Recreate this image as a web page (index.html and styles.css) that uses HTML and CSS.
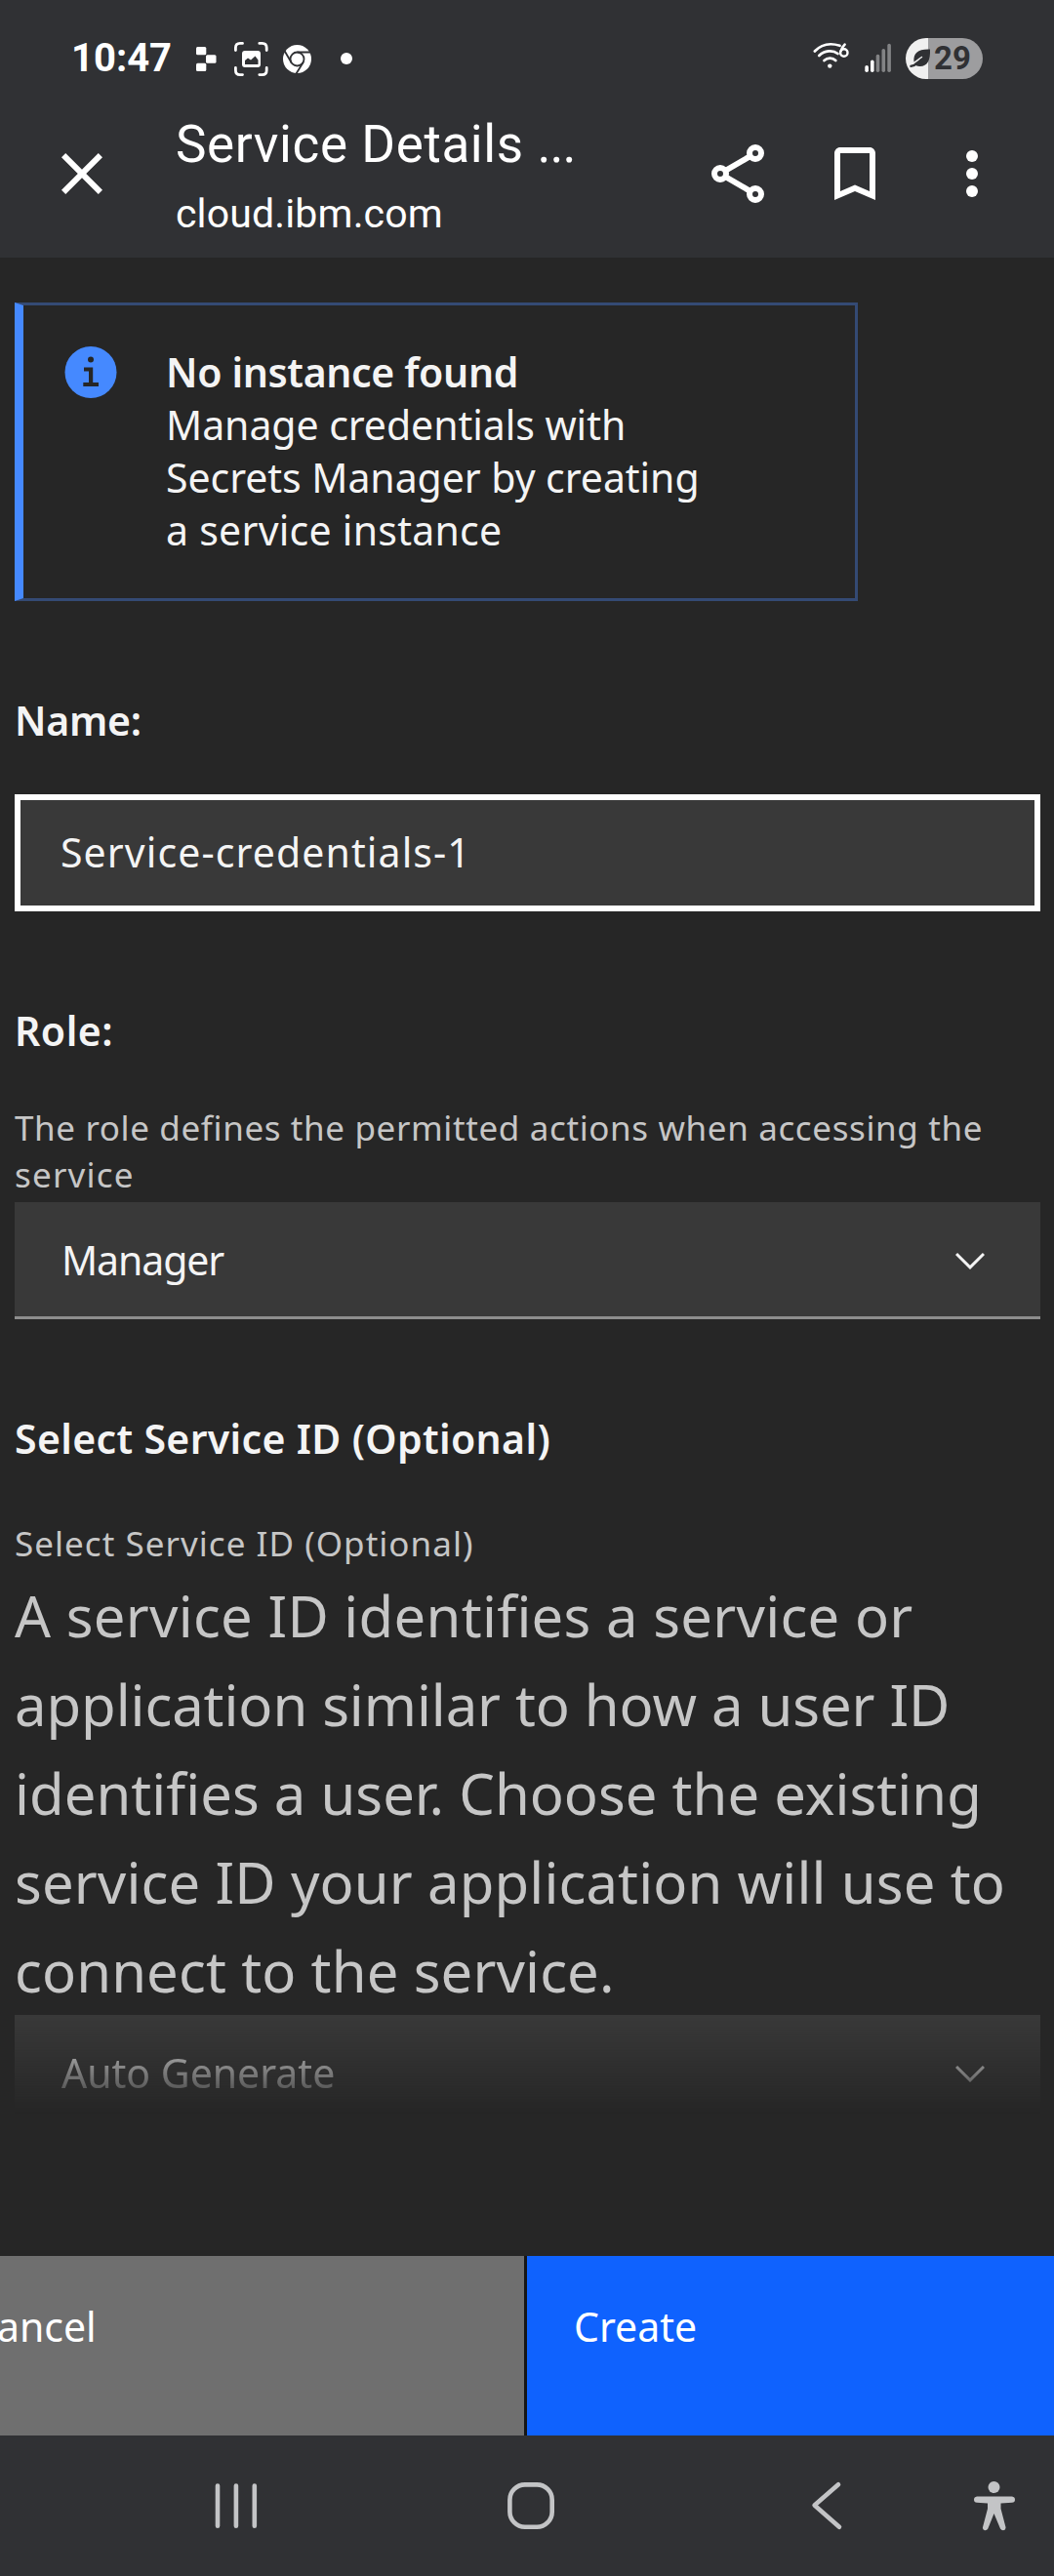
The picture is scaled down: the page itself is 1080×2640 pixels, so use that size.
FILE: index.html
```html
<!DOCTYPE html>
<html lang="en">
<head>
<meta charset="utf-8">
<title>Service Details</title>
<link rel="stylesheet" href="styles.css">
</head>
<body>
<header class="top">
  <div class="status">
    <span class="time">10:47</span>
    <svg class="notif" width="164" height="40" viewBox="197 40 164 40">
      <g fill="#fff">
        <rect x="201" y="48" width="10.3" height="8.3" rx="1.5"/>
        <rect x="211" y="56.3" width="10.5" height="8.4" rx="1.5"/>
        <rect x="201" y="64.7" width="10.3" height="8.3" rx="1.5"/>
        <rect x="248" y="52" width="19" height="17" rx="3"/>
        <circle cx="355" cy="60" r="6"/>
      </g>
      <path fill="none" stroke="#fff" stroke-width="2.8" stroke-linecap="round" d="M241.4 51.5v-2.5q0-4.6 4.6-4.6h2.5M265.8 44.4h2.8q4.6 0 4.6 4.6v2.5M273.2 69.5v2.5q0 4.6-4.6 4.6h-2.8M248.5 76.6h-2.5q-4.6 0-4.6-4.6v-2.5"/>
      <path fill="#303134" d="M251 66v-4l3-2.500 3 2 4.500-4 3 4V66z"/>
      <circle cx="304.500" cy="60.500" r="14.500" fill="#fff"/>
      <circle cx="304.500" cy="60.500" r="7" fill="none" stroke="#303134" stroke-width="1.800"/>
      <path fill="none" stroke="#303134" stroke-width="1.800" d="M304.500 53.500H318M298.500 64L291.500 52M310.600 64L303.500 75.500"/>
    </svg>
    <svg class="signal" width="84" height="40" viewBox="831 40 84 40">
      <g fill="none" stroke="#fff" stroke-width="2.700" stroke-linecap="round">
        <path d="M834.800 52.500C841 46 850 43.500 860.500 46.800"/>
        <path d="M839.300 57C845 51.300 853.500 51 858.500 55"/>
        <path d="M844.500 62C848 58.800 853 58.800 856.300 62"/>
        <circle cx="864.800" cy="54" r="3.700" stroke-width="2.400"/>
        <path stroke-width="2.400" d="M861.500 52.500Q862.500 48.500 865.700 45.500"/>
      </g>
      <circle cx="850.300" cy="67.600" r="2.200" fill="#fff"/>
      <g fill="#fff">
        <rect x="886.300" y="67" width="3.600" height="7" rx="1.800"/>
        <rect x="892" y="61.500" width="3.600" height="12.500" rx="1.800"/>
      </g>
      <g fill="#828385">
        <rect x="897.700" y="55.800" width="3.600" height="18.200" rx="1.800"/>
        <rect x="903.500" y="50" width="3.600" height="24" rx="1.800"/>
        <rect x="909.300" y="44.800" width="3.600" height="29.200" rx="1.800"/>
      </g>
    </svg>
    <div class="battery">
      <svg width="22" height="22" viewBox="0 0 22 22">
        <path fill="#303134" d="M4.500 14.500C3.500 5 9 1 21 1.500C21.500 13 18 19.500 10 19C8 19 6.500 18 5.500 17z"/>
        <path fill="none" stroke="#303134" stroke-width="2.500" stroke-linecap="round" d="M1.500 18.800C5 18.500 6.500 17 9 15"/>
        <path fill="none" stroke="#f0f0f0" stroke-width="1.500" stroke-linecap="round" d="M2 16.500C6 15.500 8 12.500 12.500 9.500"/>
      </svg>
      <span>29</span>
    </div>
  </div>
  <div class="toolbar">
    <svg class="tool" viewBox="0 0 24 24"><path fill="#fff" d="M19 6.410L17.590 5 12 10.590 6.410 5 5 6.410 10.590 12 5 17.590 6.410 19 12 13.410 17.590 19 19 17.590 13.410 12z"/></svg>
    <div class="titles">
      <div class="title">Service Details <span class="dots">...</span></div>
      <div class="url">cloud.ibm.com</div>
    </div>
    <div class="tools">
      <svg class="tool" viewBox="0 0 24 24"><g fill="none" stroke="#fff" stroke-width="2"><path d="M7.700 11L16.300 6M7.700 13l8.600 5"/><circle cx="18" cy="5" r="2"/><circle cx="6" cy="12" r="2"/><circle cx="18" cy="19" r="2"/></g></svg>
      <svg class="tool" viewBox="0 0 24 24"><path fill="#fff" d="M17 3H7c-1.100 0-2 .900-2 2v16l7-3 7 3V5c0-1.100-.900-2-2-2zm0 15l-5-2.180L7 18V5h10v13z"/></svg>
      <svg class="tool" viewBox="0 0 24 24"><g fill="#fff"><circle cx="12" cy="6" r="2"/><circle cx="12" cy="12" r="2"/><circle cx="12" cy="18" r="2"/></g></svg>
    </div>
  </div>
</header>

<main class="content">
  <section class="notice">
    <svg width="54" height="54" viewBox="0 0 54 54">
      <circle cx="27" cy="27.500" r="26.500" fill="#4589ff"/>
      <circle cx="27" cy="14.500" r="3" fill="#262626"/>
      <path fill="#262626" d="M20 22.500h9.200v15.500H35V42H19.300V38H25V26.500H20z"/>
    </svg>
    <div class="notice-text">
      <strong>No instance found</strong>
      <p>Manage credentials with<br>Secrets Manager by creating<br><span class="last">a service instance</span></p>
    </div>
  </section>

  <label class="label name-label" for="name">Name:</label>
  <input class="text-input" id="name" type="text" value="Service-credentials-1" spellcheck="false">

  <div class="label role-label">Role:</div>
  <p class="helper">The role defines the permitted actions when accessing the <br><span class="wide">service</span></p>
  <div class="select">
    <span class="manager">Manager</span>
    <svg class="chevron" width="48" height="48" viewBox="0 0 16 16"><path fill="#f4f4f4" d="M8 11L3 6 3.700 5.300 8 9.600 12.300 5.300 13 6z"/></svg>
  </div>

  <div class="label service-label">Select Service ID (Optional)</div>
  <p class="sub">Select Service ID (Optional)</p>
  <p class="description"><span class="loose">A service ID identifies a service or</span><br><span class="tight">application similar to how a user ID</span><br><span class="even">identifies a user. Choose the existing</span><br>service ID your application will use to<br>connect to the service.</p>
  <div class="select fading">
    <span>Auto Generate</span>
    <svg class="chevron" width="48" height="48" viewBox="0 0 16 16"><path fill="#f4f4f4" d="M8 11L3 6 3.700 5.300 8 9.600 12.300 5.300 13 6z"/></svg>
  </div>
</main>

<div class="actions">
  <button class="cancel"><span>Cancel</span></button>
  <button class="create"><span>Create</span></button>
</div>

<nav class="nav">
  <svg width="1080" height="144" viewBox="0 2496 1080 144">
    <g fill="none" stroke="#c3c4c6" stroke-width="4.600" stroke-linecap="round" stroke-linejoin="round">
      <path d="M223 2547.500v41.200M241.900 2547.500v41.200M260.800 2547.500v41.200"/>
      <rect x="522.400" y="2546.400" width="43.300" height="43.300" rx="15.500"/>
      <path d="M859 2546.200L834.600 2567.500 860 2589.800"/>
    </g>
    <g fill="#c3c4c6">
      <circle cx="1018.500" cy="2549" r="6"/>
      <path d="M1001 2558.500H1037Q1040 2559 1040 2561.700Q1040 2564.500 1037 2564.800L1025.500 2565.500V2571L1030.500 2590Q1030.800 2593 1028 2593.300Q1026 2593.300 1025 2591.500L1018.500 2576 1012.300 2591.500Q1011.300 2593.500 1009 2593.300Q1006.500 2592.700 1007 2590L1012 2571V2565.500L1001 2564.800Q998 2564.500 998 2561.700Q998 2559 1001 2558.500z"/>
    </g>
  </svg>
</nav>
</body>
</html>
```
FILE: styles.css
```css
* { box-sizing: border-box; }

body {
  margin: 0;
  width: 1080px;
  height: 2640px;
  overflow: hidden;
  display: flex;
  flex-direction: column;
  background: #262626;
  color: #f4f4f4;
  font: 41px/54px "Noto Sans", "Open Sans", sans-serif;
}

p { margin: 0; }
svg { display: block; flex: none; }

.top {
  height: 264px;
  flex: none;
  background: #303134;
  color: #fff;
  font-family: Roboto, sans-serif;
}

.status {
  height: 115px;
  padding: 5px 73px 0 73px;
  display: flex;
  align-items: center;
}
.time { width: 124px; font-size: 40px; font-weight: 700; }
.signal { margin-left: auto; }
.battery {
  width: 79px;
  height: 42px;
  margin-left: 13px;
  padding-left: 4px;
  border-radius: 21px;
  display: flex;
  align-items: center;
  gap: 3px;
  background: linear-gradient(90deg, #f0f0f0 23px, #9d9d9f 23px);
  color: #303134;
  font-size: 33px;
  font-weight: 700;
  line-height: 40px;
}

.toolbar { display: flex; padding: 0 48px; }
.tool { width: 72px; height: 72px; margin-top: 27px; }
.titles { width: 420px; margin-left: 60px; white-space: nowrap; }
.title { font-size: 53px; line-height: 66px; letter-spacing: .6px; }
.dots { letter-spacing: -1px; }
.url { font-size: 41px; line-height: 76px; letter-spacing: .15px; }
.tools { display: flex; gap: 48px; margin-left: auto; }

.content {
  height: 2048px;
  flex: none;
  padding: 46px 14px 0 15px;
}

.notice {
  width: 864px;
  height: 306px;
  padding: 41px 0 0 42px;
  display: flex;
  gap: 50px;
  border: 3px solid #344a74;
  border-left: 9px solid #4589ff;
}
.notice strong { display: block; font-weight: 600; letter-spacing: -.35px; }
.notice p { letter-spacing: -.05px; }
.notice .last { letter-spacing: .26px; }

.label { display: block; font-weight: 600; letter-spacing: .35px; }
.name-label { margin-top: 95px; letter-spacing: -.3px; }
.role-label { margin-top: 95px; letter-spacing: .5px; }
.service-label { margin-top: 95px; }

.text-input {
  display: block;
  width: 100%;
  height: 120px;
  margin-top: 49px;
  padding: 0 41px 3px;
  border: 6px solid #fff;
  border-radius: 0;
  outline: 0;
  background: #393939;
  color: #f4f4f4;
  font: inherit;
  letter-spacing: 1.1px;
}

.helper, .sub { color: #c6c6c6; font-size: 35px; line-height: 48px; }
.helper { margin-top: 49px; letter-spacing: .62px; }
.helper .wide { letter-spacing: 1.2px; }
.sub { margin-top: 57px; letter-spacing: 1.03px; }
.description {
  margin-top: 4px;
  color: #c6c6c6;
  font-size: 58px;
  line-height: 91px;
  letter-spacing: .12px;
  white-space: nowrap;
}
.description .loose { letter-spacing: .28px; }
.description .tight { letter-spacing: -.08px; }
.description .even { letter-spacing: .02px; }

.select {
  height: 120px;
  margin-top: 4px;
  padding: 0 48px;
  display: flex;
  align-items: center;
  justify-content: space-between;
  border-bottom: 3px solid #8d8d8d;
  background: #393939;
}
.manager { letter-spacing: -1.1px; }
.chevron { margin-top: 2px; }
.fading {
  margin-top: 0;
  -webkit-mask-image: linear-gradient(#000, transparent 101px);
  mask-image: linear-gradient(#000, transparent 101px);
}

.actions {
  height: 184px;
  flex: none;
  display: flex;
  gap: 3px;
  background: #161616;
}
.actions button {
  padding: 45px 0 0;
  display: flex;
  align-items: flex-start;
  border: 0;
  color: #fff;
  font: inherit;
}
.cancel { width: 537px; background: #6f6f6f; }
.cancel span { margin-left: -29px; }
.create { flex: 1; background: #0f62fe; }
.create span { margin-left: 48px; }

.nav { height: 144px; flex: none; background: #303134; }
```
